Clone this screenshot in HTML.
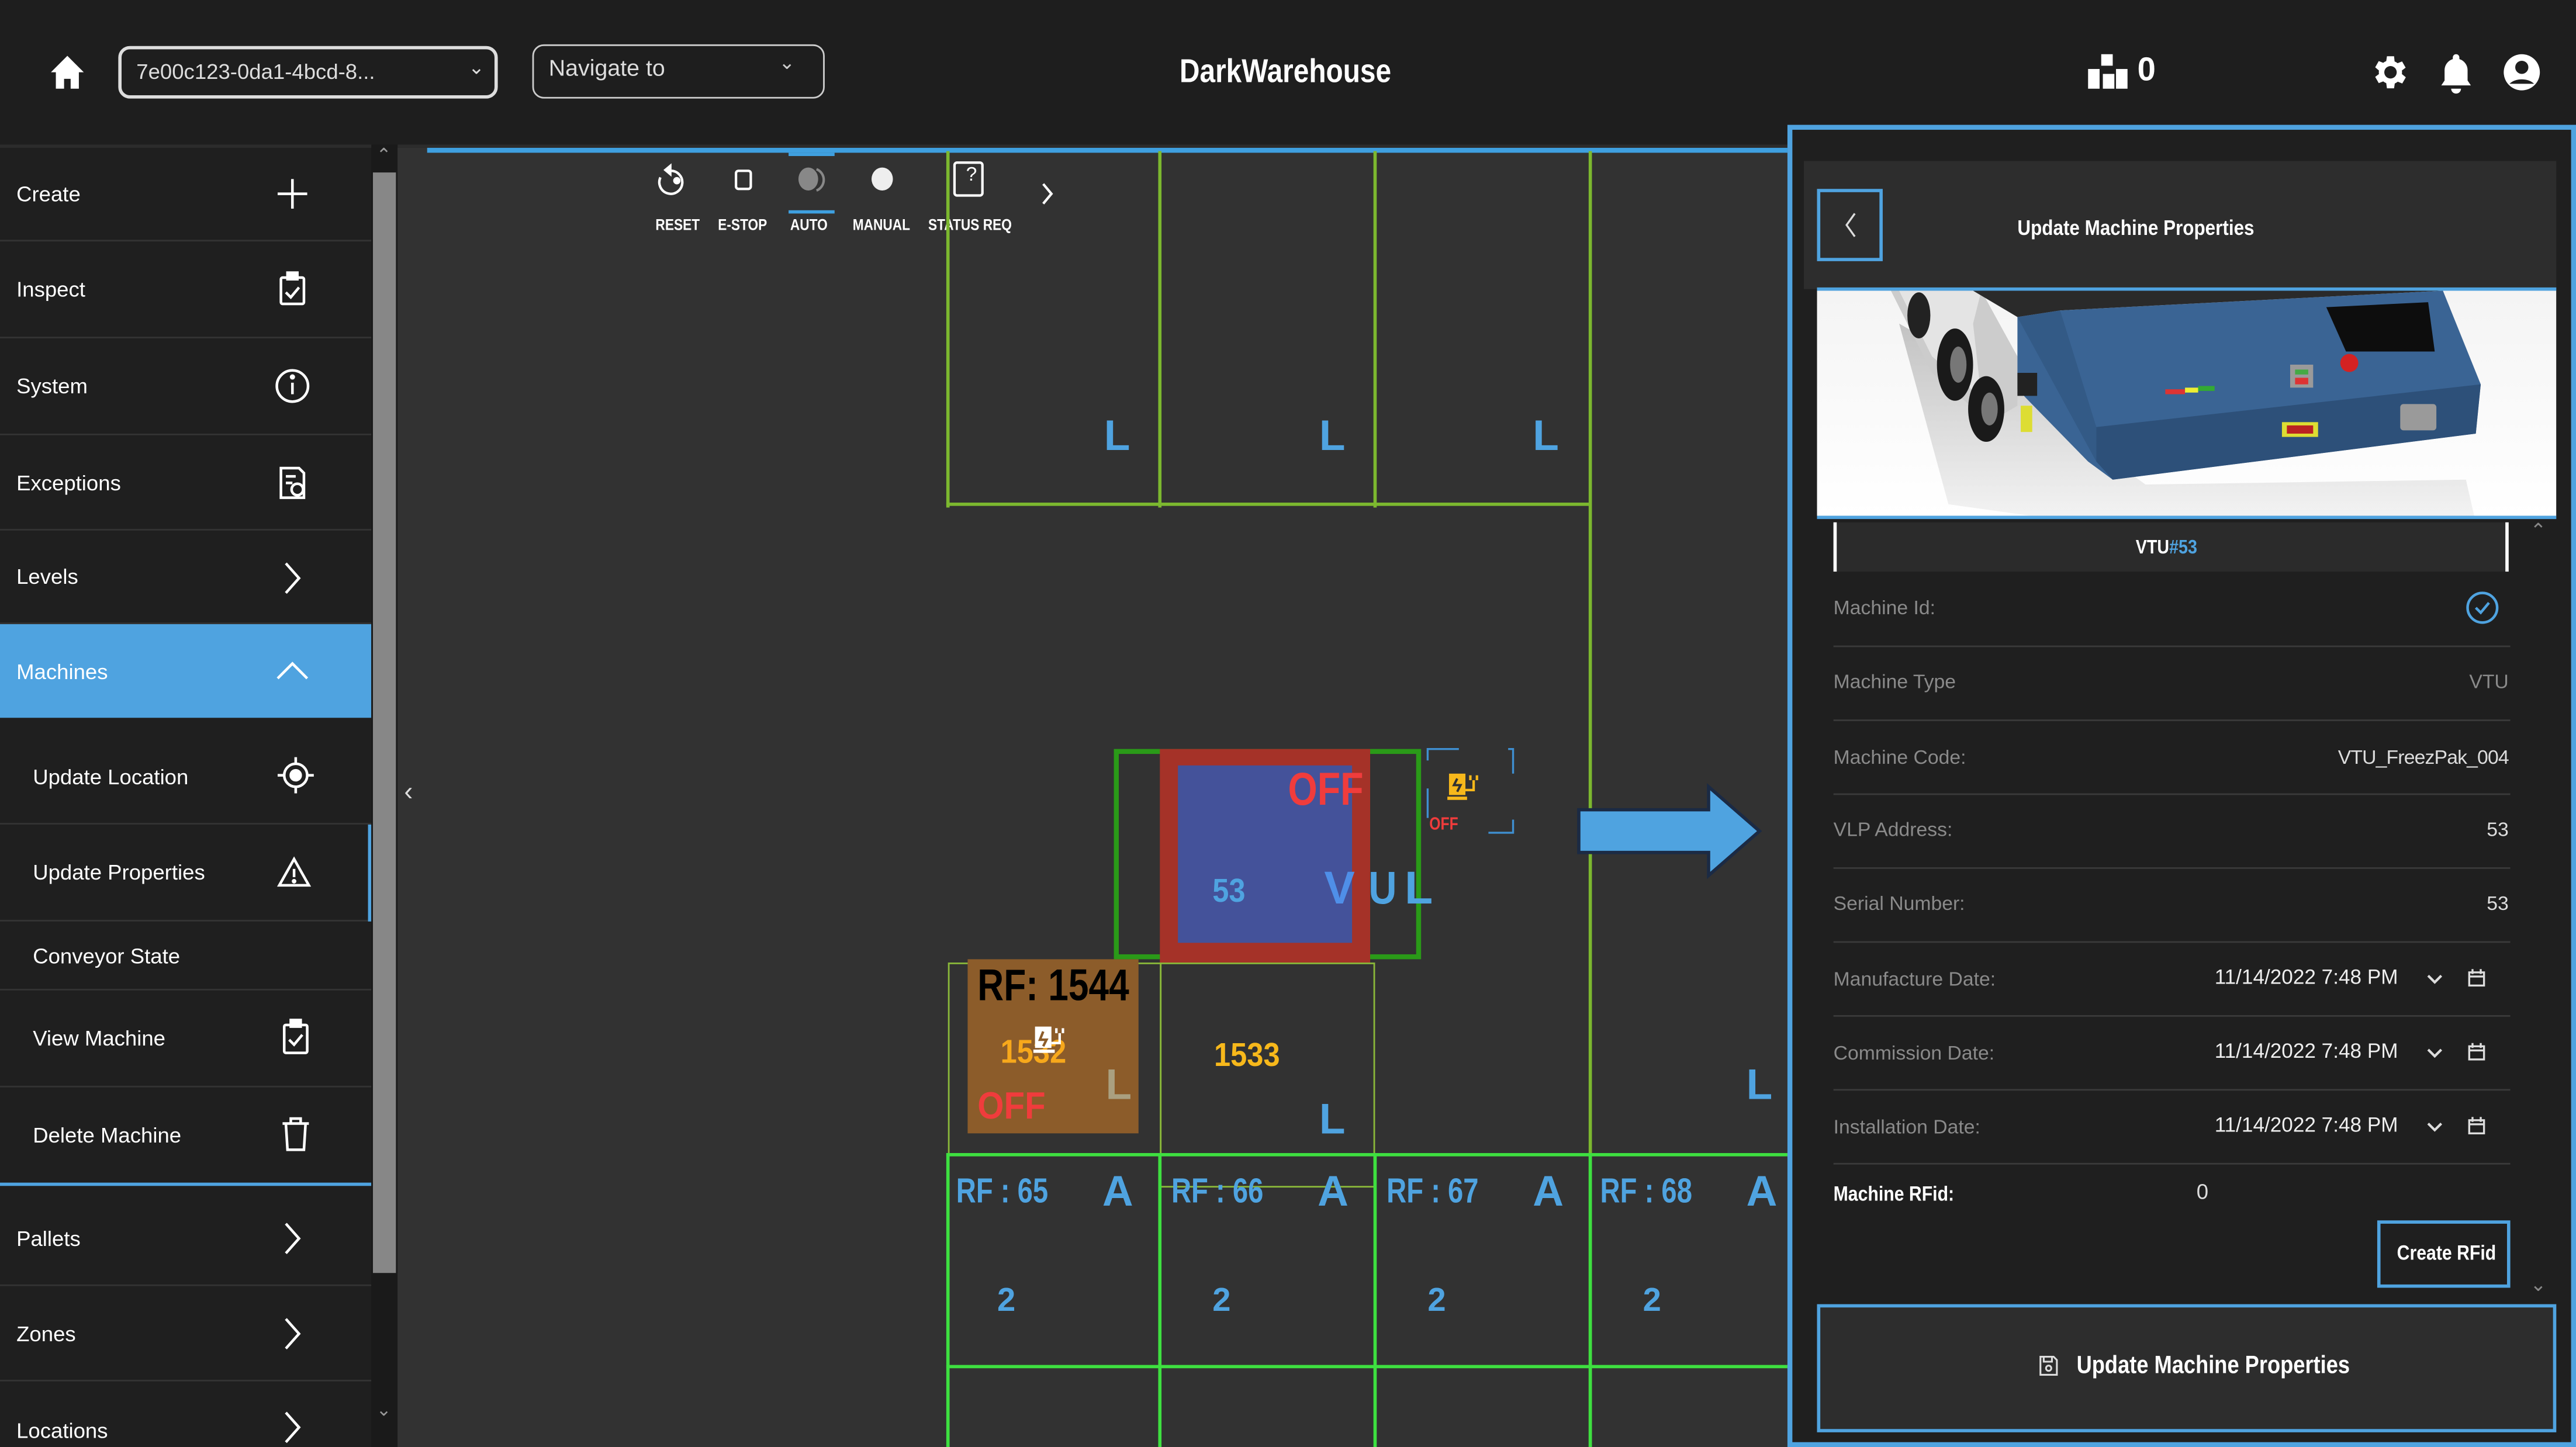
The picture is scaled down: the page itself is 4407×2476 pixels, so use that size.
<!DOCTYPE html>
<html><head><meta charset="utf-8">
<style>
*{margin:0;padding:0;box-sizing:border-box}
html,body{width:4407px;height:2475px;overflow:hidden;background:#1e1e1e}
#s{position:absolute;left:0;top:0;width:1568px;height:881px;transform:scale(2.8106);transform-origin:0 0;background:#1e1e1e;font-family:"Liberation Sans",sans-serif;color:#fff;overflow:hidden}
.a{position:absolute}
.t{position:absolute;white-space:nowrap}
.r{position:absolute;white-space:nowrap;text-align:right}
.side .it{position:absolute;left:0;width:226px;border-bottom:1px solid #333;font-size:13px;color:#fff}
.side .it span{position:absolute;top:50%;transform:translateY(-50%)}
.vl{position:absolute;width:2px}
.hl{position:absolute;height:2px}
.b{font-weight:bold}
.lbl{color:#8a8a8a;font-size:12px}
.row{position:absolute;left:1116px;width:412px;height:1px;background:#3a3a3a}
.bl{color:#4fa3e0;font-weight:bold}
</style></head><body><div id="s">

<!-- top bar -->
<svg class="a" style="left:29px;top:32px" width="24" height="24" viewBox="0 0 24 24"><path d="M12 2 L2 12 H5 V22 H10 V16 H14 V22 H19 V12 H22 Z" fill="#fff"/></svg>
<div class="a" style="left:72px;top:28px;width:231px;height:32px;border:2px solid #ddd;border-radius:7px"></div>
<div class="t" style="left:83px;top:36px;font-size:13px;color:#ddd">7e00c123-0da1-4bcd-8...</div>
<div class="t" style="left:285px;top:34px;font-size:12px;color:#ddd">&#8964;</div>
<div class="a" style="left:324px;top:27px;width:178px;height:33px;border:1.5px solid #ccc;border-radius:7px"></div>
<div class="t" style="left:334px;top:33px;font-size:14px;color:#ddd">Navigate to</div>
<div class="t" style="left:474px;top:31px;font-size:12px;color:#ccc">&#8964;</div>
<div class="t b" style="left:718px;top:33px;font-size:20px;transform:scaleX(.85);transform-origin:0 0">DarkWarehouse</div>
<svg class="a" style="left:1270px;top:32px" width="26" height="24" viewBox="0 0 26 24"><rect x="9" y="1" width="7" height="7" fill="#fff"/><rect x="1" y="10" width="7" height="12" fill="#fff"/><rect x="10" y="13" width="7" height="9" fill="#fff"/><rect x="18" y="10" width="7" height="12" fill="#fff"/></svg>
<div class="t b" style="left:1301px;top:32px;font-size:20px">0</div>
<svg class="a" style="left:1441px;top:31px" width="26" height="26" viewBox="0 0 24 24"><path fill="#fff" d="M19.4 13a7.5 7.5 0 000-2l2.1-1.6-2-3.5-2.5 1a7.7 7.7 0 00-1.7-1L15 3h-4l-.4 2.7a7.7 7.7 0 00-1.7 1l-2.5-1-2 3.5L6.5 11a7.5 7.5 0 000 2l-2.1 1.6 2 3.5 2.5-1a7.7 7.7 0 001.7 1L11 21h4l.4-2.7a7.7 7.7 0 001.7-1l2.5 1 2-3.5zM13 15.5A3.5 3.5 0 1113 8.5a3.5 3.5 0 010 7z"/></svg>
<svg class="a" style="left:1483px;top:31px" width="24" height="26" viewBox="0 0 24 26"><path fill="#fff" d="M12 2a2 2 0 012 2v1a7 7 0 015 7v6l2 3H3l2-3v-6a7 7 0 015-7V4a2 2 0 012-2zM9 23h6a3 3 0 01-6 0z"/></svg>
<svg class="a" style="left:1523px;top:32px" width="24" height="24" viewBox="0 0 24 24"><circle cx="12" cy="12" r="11" fill="#fff"/><circle cx="12" cy="9" r="4" fill="#1e1e1e"/><path d="M4.5 19a9 6 0 0115 0" fill="#1e1e1e"/></svg>

<!-- sidebar -->
<div class="a" style="left:0;top:88px;width:226px;height:793px;background:#1f1f1f"></div>
<div class="a" style="left:0;top:88px;width:1090px;height:2px;background:#2c2c2c"></div>
<div class="side">
<div class="it" style="top:90px;height:57px"><span style="left:10px">Create</span></div>
<div class="it" style="top:147px;height:59px"><span style="left:10px">Inspect</span></div>
<div class="it" style="top:206px;height:59px"><span style="left:10px">System</span></div>
<div class="it" style="top:265px;height:58px"><span style="left:10px">Exceptions</span></div>
<div class="it" style="top:323px;height:57px"><span style="left:10px">Levels</span></div>
<div class="it" style="top:380px;height:57px;background:#4fa3e0;border:none"><span style="left:10px">Machines</span></div>
<div class="it" style="top:444px;height:58px"><span style="left:20px">Update Location</span></div>
<div class="it" style="top:502px;height:59px"><span style="left:20px">Update Properties</span></div>
<div class="it" style="top:561px;height:42px"><span style="left:20px">Conveyor State</span></div>
<div class="it" style="top:603px;height:59px"><span style="left:20px">View Machine</span></div>
<div class="it" style="top:662px;height:60px;border-bottom:2px solid #4fa3e0"><span style="left:20px">Delete Machine</span></div>
<div class="it" style="top:725px;height:58px"><span style="left:10px">Pallets</span></div>
<div class="it" style="top:783px;height:58px"><span style="left:10px">Zones</span></div>
<div class="it" style="top:841px;height:40px;border:none"><span style="left:10px;top:30px">Locations</span></div>
</div>
<div class="a" style="left:224px;top:502px;width:2px;height:59px;background:#4fa3e0"></div>
<svg class="a" style="left:0;top:0" width="242" height="881" fill="none" stroke="#fff" stroke-width="1.6">
<path d="M178 109v18M169 118h18"/>
<rect x="171" y="169" width="14" height="16" rx="1"/><rect x="175" y="166" width="6" height="4" fill="#fff"/><path d="M174 178l3 3 5-6"/>
<circle cx="178" cy="235" r="9.5"/><path d="M178 233v7"/><circle cx="178" cy="229.5" r=".8" fill="#fff"/>
<path d="M171 285h11l3 3v15h-14z"/><circle cx="181" cy="298" r="3.5"/><path d="M174 290h6M174 294h4"/>
<path d="M174 343l8 9-8 9"/>
<path d="M169 413l9-9 9 9"/>
<circle cx="180" cy="472" r="7"/><circle cx="180" cy="472" r="3" fill="#fff"/><path d="M180 461v4M180 479v4M169 472h4M187 472h4"/>
<path d="M179 523l9 16h-18z"/><path d="M179 529v5"/><circle cx="179" cy="536.5" r=".6" fill="#fff"/>
<rect x="173" y="624" width="14" height="17" rx="1"/><rect x="177" y="621" width="6" height="4" fill="#fff"/><path d="M176 633l3 3 5-6"/>
<path d="M172 684h16M177 684v-3h6v3M174 684l1 16h10l1-16"/>
<path d="M174 745l8 9-8 9"/><path d="M174 803l8 9-8 9"/><path d="M174 860l8 9-8 9"/>
</svg>
<div class="a" style="left:226px;top:88px;width:16px;height:793px;background:#1a1a1a"></div>
<div class="a" style="left:227px;top:105px;width:14px;height:670px;background:#878787"></div>
<div class="t" style="left:229px;top:88px;font-size:11px;color:#999">&#8963;</div>
<div class="t" style="left:229px;top:852px;font-size:11px;color:#999">&#8964;</div>

<!-- canvas -->
<div class="a" style="left:242px;top:90px;width:848px;height:791px;background:#323232"></div>
<div class="a" style="left:260px;top:90px;width:830px;height:3px;background:#3fa0e0"></div>
<div class="t" style="left:246px;top:474px;font-size:16px;color:#ddd">&#8249;</div>

<svg class="a" style="left:395px;top:96px" width="260" height="30" fill="none" stroke="#fff" stroke-width="1.5">
<path d="M13 8a7 7 0 11-6 4"/><path d="M13 5v5l-3-2.5z" fill="#fff"/><circle cx="17" cy="14" r="1.5" fill="#fff"/>
<rect x="53" y="8" width="9" height="11" rx="1.5"/>
<ellipse cx="97" cy="13" rx="6" ry="7" fill="#888" stroke="none"/><path d="M102 7a7 7 0 010 13" stroke="#888"/>
<ellipse cx="142" cy="13" rx="6.5" ry="7" fill="#eee" stroke="none"/>
<rect x="186" y="3" width="17" height="20" rx="1.5"/>
<path d="M240 16l5 6-5 6"/>
</svg>
<div class="t" style="left:588px;top:99px;font-size:12px">?</div>
<div class="a" style="left:480px;top:93px;width:28px;height:2px;background:#3fa0e0"></div>
<div class="a" style="left:480px;top:128px;width:28px;height:2px;background:#3fa0e0"></div>
<div class="t b" style="left:399px;top:132px;font-size:9.5px;transform:scaleX(.85);transform-origin:0 0">RESET</div>
<div class="t b" style="left:437px;top:132px;font-size:9.5px;transform:scaleX(.85);transform-origin:0 0">E-STOP</div>
<div class="t b" style="left:481px;top:132px;font-size:9.5px;transform:scaleX(.85);transform-origin:0 0">AUTO</div>
<div class="t b" style="left:519px;top:132px;font-size:9.5px;transform:scaleX(.85);transform-origin:0 0">MANUAL</div>
<div class="t b" style="left:565px;top:132px;font-size:9.5px;transform:scaleX(.85);transform-origin:0 0">STATUS REQ</div>

<div class="vl" style="left:576px;top:92px;height:217px;background:#7cb82f"></div>
<div class="vl" style="left:705px;top:92px;height:217px;background:#7cb82f"></div>
<div class="vl" style="left:836px;top:92px;height:217px;background:#7cb82f"></div>
<div class="vl" style="left:967px;top:92px;height:790px;background:#7cb82f"></div>
<div class="hl" style="left:576px;top:306px;width:392px;background:#7cb82f"></div>
<div class="t bl" style="left:672px;top:250px;font-size:26px">L</div>
<div class="t bl" style="left:803px;top:250px;font-size:26px">L</div>
<div class="t bl" style="left:933px;top:250px;font-size:26px">L</div>

<div class="a" style="left:577px;top:586px;width:130px;height:117px;border:1.5px solid #8ab83a"></div>
<div class="a" style="left:706px;top:586px;width:131px;height:137px;border:1.5px solid #8ab83a"></div>
<div class="a" style="left:589px;top:584px;width:104px;height:106px;background:#8c5c2a"></div>
<div class="t b" style="left:595px;top:585px;font-size:27px;color:#000;transform:scaleX(.82);transform-origin:0 0">RF: 1544</div>
<div class="t b" style="left:609px;top:630px;font-size:20px;color:#f7a81b;transform:scaleX(.9);transform-origin:0 0">1532</div>
<div class="t b" style="left:595px;top:660px;font-size:23px;color:#f03c3c;transform:scaleX(.9);transform-origin:0 0">OFF</div>
<div class="t b" style="left:673px;top:645px;font-size:26px;color:#aaa080">L</div>
<svg class="a" style="left:628px;top:623px" width="24" height="22"><rect x="2" y="2" width="10" height="13" fill="#fff"/><path d="M7 5l-2 5h4l-2 4" stroke="#8c5c2a" stroke-width="1.5" fill="none"/><rect x="1" y="16" width="13" height="2" fill="#fff"/><path d="M12 12h5v-6M15 3v3M19 3v3" stroke="#fff" stroke-width="1.5" fill="none"/></svg>
<div class="t b" style="left:739px;top:632px;font-size:20px;color:#f7b81b;transform:scaleX(.9);transform-origin:0 0">1533</div>
<div class="t bl" style="left:803px;top:666px;font-size:26px">L</div>
<div class="t bl" style="left:1063px;top:645px;font-size:26px">L</div>

<div class="a" style="left:678px;top:456px;width:187px;height:128px;border:3px solid #2a9a18"></div>
<div class="a" style="left:706px;top:456px;width:128px;height:130px;background:#a53228"></div>
<div class="a" style="left:717px;top:466px;width:106px;height:108px;background:#44529a"></div>
<div class="t b" style="left:784px;top:465px;font-size:28px;color:#f03c3c;transform:scaleX(.82);transform-origin:0 0">OFF</div>
<div class="t b" style="left:738px;top:532px;font-size:20px;color:#4fa3e0;transform:scaleX(.9);transform-origin:0 0">53</div>
<div class="t b" style="left:806px;top:525px;font-size:28px;color:#4f8fe8">V</div>
<div class="t b" style="left:833px;top:525px;font-size:28px;color:#4fa3e0;transform:scaleX(.85);transform-origin:0 0">U</div>
<div class="t b" style="left:855px;top:525px;font-size:28px;color:#4fa3e0">L</div>
<svg class="a" style="left:868px;top:455px" width="56" height="55" fill="none" stroke="#3f8fd0" stroke-width="1.2"><path d="M1 8V1h19M50 1h3v15M1 25v18M38 52h15v-8"/><rect x="14" y="16" width="10" height="13" fill="#f7b81b" stroke="none"/><rect x="13" y="30" width="12" height="2" fill="#f7b81b" stroke="none"/><path d="M24 26h5v-6M27 17v3M31 17v3" stroke="#f7b81b" stroke-width="1.5"/><path d="M19 19l-2 4h4l-2 4" stroke="#323232" stroke-width="1.4"/></svg>
<div class="t b" style="left:870px;top:496px;font-size:11px;color:#f03c3c;transform:scaleX(.8);transform-origin:0 0">OFF</div>
<svg class="a" style="left:958px;top:476px" width="118" height="60"><path d="M3 17H82V3L113 30L82 57V43H3Z" fill="#4fa3e0" stroke="#1b2a44" stroke-width="2"/></svg>

<div class="hl" style="left:576px;top:702px;width:514px;background:#3ee040"></div>
<div class="hl" style="left:576px;top:831px;width:514px;background:#3ee040"></div>
<div class="vl" style="left:576px;top:702px;height:180px;background:#3ee040"></div>
<div class="vl" style="left:705px;top:702px;height:180px;background:#3ee040"></div>
<div class="vl" style="left:836px;top:702px;height:180px;background:#3ee040"></div>
<div class="vl" style="left:967px;top:702px;height:180px;background:#3ee040"></div>
<div class="t bl" style="left:582px;top:714px;font-size:21px;transform:scaleX(.8);transform-origin:0 0">RF : 65</div>
<div class="t bl" style="left:713px;top:714px;font-size:21px;transform:scaleX(.8);transform-origin:0 0">RF : 66</div>
<div class="t bl" style="left:844px;top:714px;font-size:21px;transform:scaleX(.8);transform-origin:0 0">RF : 67</div>
<div class="t bl" style="left:974px;top:714px;font-size:21px;transform:scaleX(.8);transform-origin:0 0">RF : 68</div>
<div class="t bl" style="left:671px;top:710px;font-size:26px">A</div>
<div class="t bl" style="left:802px;top:710px;font-size:26px">A</div>
<div class="t bl" style="left:933px;top:710px;font-size:26px">A</div>
<div class="t bl" style="left:1063px;top:710px;font-size:26px">A</div>
<div class="t bl" style="left:607px;top:781px;font-size:20px">2</div>
<div class="t bl" style="left:738px;top:781px;font-size:20px">2</div>
<div class="t bl" style="left:869px;top:781px;font-size:20px">2</div>
<div class="t bl" style="left:1000px;top:781px;font-size:20px">2</div>

<!-- right panel -->
<div class="a" style="left:1088px;top:76px;width:480px;height:805px;border:3px solid #4fa3e0;background:#1f1f1f"></div>
<div class="a" style="left:1098px;top:98px;width:458px;height:78px;background:#2d2d2d"></div>
<div class="a" style="left:1106px;top:115px;width:40px;height:44px;border:2px solid #4fa3e0"></div>
<svg class="a" style="left:1106px;top:115px" width="40" height="44" fill="none" stroke="#ddd" stroke-width="1.2"><path d="M23 15l-5 7 5 7"/></svg>
<div class="t b" style="left:1228px;top:131px;font-size:13px;transform:scaleX(.86);transform-origin:0 0">Update Machine Properties</div>
<div class="a" style="left:1106px;top:175px;width:450px;height:2px;background:#4fa3e0"></div>
<svg class="a" style="left:1106px;top:177px" width="450" height="137" viewBox="0 0 450 137">
<defs><linearGradient id="g" x1="0" y1="0" x2="0" y2="1"><stop offset="0" stop-color="#f4f4f4"/><stop offset="1" stop-color="#fff"/></linearGradient>
<linearGradient id="sh" x1="0" y1="0" x2="0" y2="1"><stop offset="0" stop-color="#999"/><stop offset="1" stop-color="#e8e8e8"/></linearGradient></defs>
<rect width="450" height="137" fill="url(#g)"/>
<path d="M50 20L80 130L130 137H400L395 115L200 118L120 60Z" fill="url(#sh)" opacity=".55"/>
<path d="M45 0H100L122 40L122 70L105 80L70 50Z" fill="#ccc"/>
<path d="M50 0L70 40L100 65L95 20L100 0Z" fill="#e4e4e4"/>
<ellipse cx="62" cy="15" rx="7" ry="14" fill="#222"/>
<ellipse cx="84" cy="45" rx="11" ry="22" fill="#1a1a1a"/><ellipse cx="86" cy="45" rx="5" ry="11" fill="#777"/>
<ellipse cx="103" cy="72" rx="11" ry="20" fill="#1a1a1a"/><ellipse cx="105" cy="72" rx="5" ry="10" fill="#777"/>
<path d="M95 0H381L148 12L122 16Z" fill="#2a2a2a"/>
<path d="M122 16L148 12L381 0L404 57L401 87L180 115L165 104L122 60Z" fill="#3a6494"/>
<path d="M122 16L148 12L170 83L170 104Z" fill="#335a86"/>
<path d="M170 83L404 57L401 87L180 115L170 104Z" fill="#2d5079"/>
<path d="M310 10L372 7L376 37L322 37Z" fill="#0d0d0d"/>
<circle cx="324" cy="44" r="5.5" fill="#d42222"/>
<rect x="288" y="45" width="14" height="14" fill="#9a9a9a"/><rect x="291" y="48" width="8" height="3" fill="#4a4"/><rect x="291" y="53" width="8" height="4" fill="#d33"/>
<rect x="212" y="60" width="12" height="3" fill="#d33"/><rect x="224" y="59" width="8" height="3" fill="#ee3"/><rect x="232" y="58" width="10" height="3" fill="#3a3"/>
<rect x="283" y="80" width="22" height="9" fill="#dd3"/><rect x="286" y="82" width="16" height="5" fill="#b22"/>
<rect x="355" y="69" width="22" height="16" rx="2" fill="#9a9a9a"/>
<rect x="124" y="70" width="7" height="16" fill="#dd3"/>
<path d="M122 50h12v14h-12z" fill="#222"/>
</svg>
<div class="a" style="left:1106px;top:314px;width:450px;height:2px;background:#4fa3e0"></div>
<div class="a" style="left:1116px;top:318px;width:411px;height:30px;background:#2b2b2b;border-left:2px solid #fff;border-right:2px solid #fff"></div>
<div class="t b" style="left:1300px;top:326px;font-size:12px;transform:scaleX(.85);transform-origin:0 0">VTU<span style="color:#4fa3e0">#53</span></div>
<div class="t" style="left:1540px;top:316px;font-size:12px;color:#888">&#8963;</div>
<div class="t" style="left:1540px;top:775px;font-size:12px;color:#888">&#8964;</div>

<div class="t lbl" style="left:1116px;top:363px">Machine Id:</div>
<svg class="a" style="left:1500px;top:359px" width="22" height="22" fill="none" stroke="#4fa3e0" stroke-width="1.6"><circle cx="11" cy="11" r="9"/><path d="M7 11l3 3 5-6"/></svg>
<div class="row" style="top:393px"></div>
<div class="t lbl" style="left:1116px;top:408px">Machine Type</div>
<div class="r lbl" style="right:41px;top:408px">VTU</div>
<div class="row" style="top:438px"></div>
<div class="t lbl" style="left:1116px;top:454px">Machine Code:</div>
<div class="r" style="right:41px;top:454px;font-size:12px;color:#ddd;letter-spacing:-.3px">VTU_FreezPak_004</div>
<div class="row" style="top:483px"></div>
<div class="t lbl" style="left:1116px;top:498px">VLP Address:</div>
<div class="r" style="right:41px;top:498px;font-size:12px;color:#ddd">53</div>
<div class="row" style="top:528px"></div>
<div class="t lbl" style="left:1116px;top:543px">Serial Number:</div>
<div class="r" style="right:41px;top:543px;font-size:12px;color:#ddd">53</div>
<div class="row" style="top:573px"></div>
<div class="t lbl" style="left:1116px;top:589px">Manufacture Date:</div>
<div class="t" style="left:1348px;top:588px;font-size:12.5px;color:#eee">11/14/2022 7:48 PM</div>
<div class="row" style="top:618px"></div>
<div class="t lbl" style="left:1116px;top:634px">Commission Date:</div>
<div class="t" style="left:1348px;top:633px;font-size:12.5px;color:#eee">11/14/2022 7:48 PM</div>
<div class="row" style="top:663px"></div>
<div class="t lbl" style="left:1116px;top:679px">Installation Date:</div>
<div class="t" style="left:1348px;top:678px;font-size:12.5px;color:#eee">11/14/2022 7:48 PM</div>
<svg class="a" style="left:1476px;top:589px" width="40" height="105" fill="none" stroke="#ddd" stroke-width="1.2">
<path d="M2 5l4 4 4-4M2 50l4 4 4-4M2 95l4 4 4-4" stroke-width="1.5"/>
<g transform="translate(25,0)"><rect x="2" y="3" width="9" height="8"/><path d="M2 5.5h9M4 1v3M9 1v3"/><rect x="2" y="48" width="9" height="8"/><path d="M2 50.5h9M4 46v3M9 46v3"/><rect x="2" y="93" width="9" height="8"/><path d="M2 95.5h9M4 91v3M9 91v3"/></g></svg>
<div class="row" style="top:708px"></div>
<div class="t b" style="left:1116px;top:720px;font-size:12.5px;transform:scaleX(.86);transform-origin:0 0">Machine RFid:</div>
<div class="t" style="left:1337px;top:718px;font-size:13px;color:#ddd">0</div>
<div class="a" style="left:1447px;top:743px;width:81px;height:41px;border:2px solid #4fa3e0"></div>
<div class="t b" style="left:1459px;top:756px;font-size:12.5px;transform:scaleX(.86);transform-origin:0 0">Create RFid</div>
<div class="a" style="left:1106px;top:794px;width:450px;height:78px;border:2px solid #4fa3e0;background:#2d2d2d"></div>
<svg class="a" style="left:1241px;top:825px" width="12" height="13" fill="none" stroke="#ddd" stroke-width="1.1"><path d="M1 1h8l2 2v9H1z"/><circle cx="6" cy="8" r="1.6"/><path d="M3 1v3h5V1"/></svg>
<div class="t b" style="left:1264px;top:823px;font-size:15px;transform:scaleX(.86);transform-origin:0 0">Update Machine Properties</div>
</div></body></html>
